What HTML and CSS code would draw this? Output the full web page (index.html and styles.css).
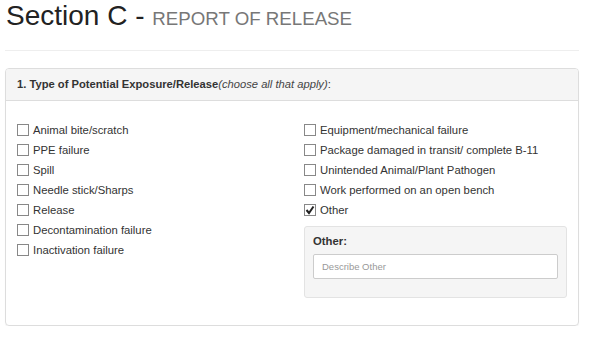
FILE: index.html
```html
<!DOCTYPE html>
<html lang="en">
<head>
    <meta charset="UTF-8">
    <meta name="viewport" content="width=device-width, initial-scale=1.0">
    <title>Section C - Report of Release</title>
    <link rel="stylesheet" href="styles.css">
</head>
<body>
    <h1 class="section-title">Section C - <small>REPORT OF RELEASE</small></h1>
    <hr class="divider">

    <div class="panel">
        <div class="panel-heading">
            <b>1. Type of Potential Exposure/Release</b><i>(choose all that apply)</i>:
        </div>
        <div class="panel-body">
            <div class="col">
                <label class="check"><span class="box"></span>Animal bite/scratch</label>
                <label class="check"><span class="box"></span>PPE failure</label>
                <label class="check"><span class="box"></span>Spill</label>
                <label class="check"><span class="box"></span>Needle stick/Sharps</label>
                <label class="check"><span class="box"></span>Release</label>
                <label class="check"><span class="box"></span>Decontamination failure</label>
                <label class="check"><span class="box"></span>Inactivation failure</label>
            </div>
            <div class="col">
                <label class="check"><span class="box"></span>Equipment/mechanical failure</label>
                <label class="check"><span class="box"></span>Package damaged in transit/ complete B-11</label>
                <label class="check"><span class="box"></span>Unintended Animal/Plant Pathogen</label>
                <label class="check"><span class="box"></span>Work performed on an open bench</label>
                <label class="check"><span class="box checked">
                    <svg width="10" height="10" viewBox="0 0 10 10"><path d="M1.5 5 L4 8 L8.5 1.5" fill="none" stroke="#222" stroke-width="2"/></svg>
                </span>Other</label>
                <div class="well">
                    <div class="well-label">Other:</div>
                    <div class="input">Describe Other</div>
                </div>
            </div>
        </div>
    </div>
</body>
</html>
```

FILE: styles.css
```css
body {
    font-family: "Liberation Sans", Arial, sans-serif;
    color: #333;
    margin: 0;
    padding: 0 14px 0 5px;
    background-color: #fff;
}
.section-title {
    font-size: 28px;
    font-weight: normal;
    color: #222;
    margin: 0;
    padding: 0 0 0 1px;
    line-height: 32px;
}
.section-title small {
    font-size: 18.7px;
    color: #777;
}
.divider {
    border: none;
    border-top: 1px solid #eee;
    margin: 15px 0 17px;
}
.panel {
    border: 1px solid #ddd;
    border-radius: 4px;
    box-shadow: 0 1px 1px rgba(0, 0, 0, 0.05);
    height: 256px;
}
.panel-heading {
    background-color: #f5f5f5;
    border-bottom: 1px solid #ddd;
    border-radius: 3px 3px 0 0;
    height: 31px;
    line-height: 31px;
    padding-left: 11px;
    font-size: 11.2px;
    color: #333;
}
.panel-heading i {
    color: #444;
}
.panel-body {
    display: grid;
    grid-template-columns: 287px 1fr;
    padding: 19px 11px 0 11px;
}
.check {
    display: flex;
    align-items: center;
    height: 20px;
    font-size: 11.3px;
    color: #333;
}
.box {
    width: 10px;
    height: 10px;
    border: 1px solid #888;
    margin-right: 4px;
    display: flex;
    align-items: center;
    justify-content: center;
    background: #fff;
}
.well {
    margin-top: 6px;
    width: 263px;
    height: 72px;
    box-sizing: border-box;
    background-color: #f5f5f5;
    border: 1px solid #e3e3e3;
    border-radius: 3px;
    padding: 8px 8px 0 8px;
}
.well-label {
    font-size: 11.3px;
    font-weight: bold;
    color: #333;
    margin-bottom: 7px;
}
.input {
    background: #fff;
    border: 1px solid #ccc;
    border-radius: 2px;
    height: 25px;
    line-height: 23px;
    box-sizing: border-box;
    padding-left: 8px;
    font-size: 9.5px;
    color: #999;
}
```
